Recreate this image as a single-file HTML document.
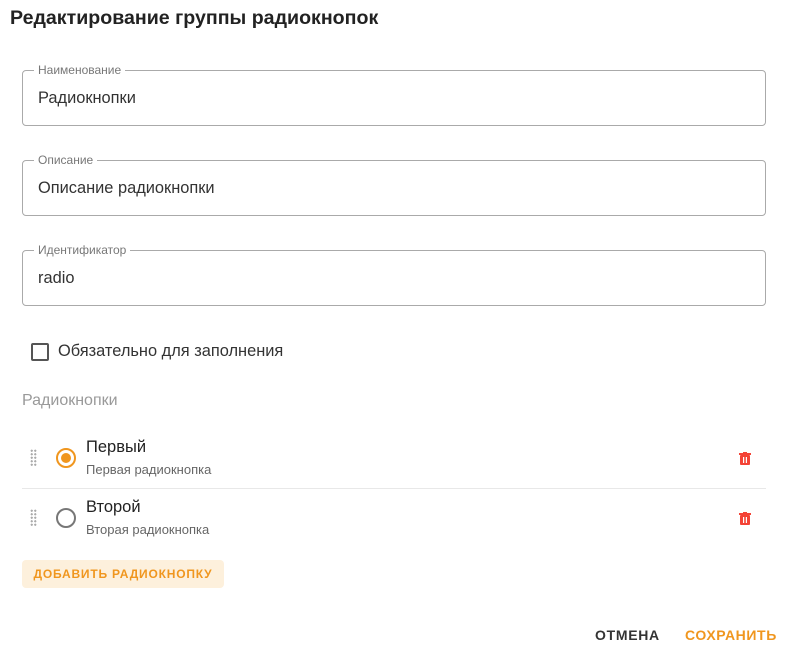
<!DOCTYPE html>
<html><head><meta charset="utf-8"><style>
*{box-sizing:border-box;margin:0;padding:0}
body{width:790px;height:657px;background:#fff;font-family:"Liberation Sans",sans-serif;color:#222;position:relative;overflow:hidden}
.a{position:absolute;white-space:nowrap}
.title{left:10px;top:7px;font-size:19.6px;font-weight:bold;color:#222}
.f{position:absolute;left:22px;width:744px;height:56px;border:1px solid #aaa;border-radius:4px}
.f .l{position:absolute;left:11px;top:-8px;background:#fff;padding:0 4px;font-size:12px;color:#777}
.f .v{position:absolute;left:15px;top:18px;font-size:16.4px;color:#333}
.cb{left:31px;top:343px;width:18px;height:18px;border:2px solid #555;border-radius:2px}
.drag{position:absolute;width:7px;height:18px;background-image:radial-gradient(circle,#aaa 1px,transparent 1.2px);background-size:3.5px 3.5px}
.radio{position:absolute;width:20px;height:20px;border-radius:50%;border:2px solid #777}
.trash{position:absolute;width:12px;height:13px}
</style></head><body>
<div class="a title">Редактирование группы радиокнопок</div>
<div class="f" style="top:70px"><span class="l">Наименование</span><span class="v">Радиокнопки</span></div>
<div class="f" style="top:160px"><span class="l">Описание</span><span class="v">Описание радиокнопки</span></div>
<div class="f" style="top:250px"><span class="l">Идентификатор</span><span class="v">radio</span></div>
<div class="a cb"></div>
<div class="a" style="left:58px;top:342px;font-size:16.4px;color:#333">Обязательно для заполнения</div>
<div class="a" style="left:22px;top:392px;font-size:16px;color:#999">Радиокнопки</div>

<div class="drag" style="left:30px;top:449px"></div>
<div class="radio" style="left:56px;top:448px;border-color:#F0961E"><div style="position:absolute;left:3px;top:3px;width:10px;height:10px;border-radius:50%;background:#F0961E"></div></div>
<div class="a" style="left:86px;top:438px;font-size:16.5px;color:#222">Первый</div>
<div class="a" style="left:86px;top:462px;font-size:13px;color:#666">Первая радиокнопка</div>
<svg class="trash" style="left:739px;top:452px" viewBox="0 0 12 13"><rect x="0" y="1" width="12" height="2" fill="#F44336"/><rect x="4" y="0" width="4" height="2" fill="#F44336"/><rect x="1" y="3" width="10" height="10" rx="1" fill="#F44336"/><rect x="4" y="5" width="1.2" height="6" fill="#fff"/><rect x="6.8" y="5" width="1.2" height="6" fill="#fff"/></svg>
<div style="position:absolute;left:22px;top:488px;width:744px;height:1px;background:#e8e8e8"></div>

<div class="drag" style="left:30px;top:509px"></div>
<div class="radio" style="left:56px;top:508px"></div>
<div class="a" style="left:86px;top:498px;font-size:16.5px;color:#222">Второй</div>
<div class="a" style="left:86px;top:522px;font-size:13px;color:#666">Вторая радиокнопка</div>
<svg class="trash" style="left:739px;top:512px" viewBox="0 0 12 13"><rect x="0" y="1" width="12" height="2" fill="#F44336"/><rect x="4" y="0" width="4" height="2" fill="#F44336"/><rect x="1" y="3" width="10" height="10" rx="1" fill="#F44336"/><rect x="4" y="5" width="1.2" height="6" fill="#fff"/><rect x="6.8" y="5" width="1.2" height="6" fill="#fff"/></svg>

<div class="a" style="left:22px;top:560px;width:202px;height:28px;background:#FDF0DC;border-radius:4px;font-size:12px;font-weight:bold;color:#F0961E;letter-spacing:0.8px;text-align:center;line-height:28px">ДОБАВИТЬ РАДИОКНОПКУ</div>

<div class="a" style="left:595px;top:627px;font-size:14px;font-weight:bold;color:#333;letter-spacing:0.7px">ОТМЕНА</div>
<div class="a" style="left:685px;top:627px;font-size:14px;font-weight:bold;color:#F0961E;letter-spacing:0.6px">СОХРАНИТЬ</div>
</body></html>
